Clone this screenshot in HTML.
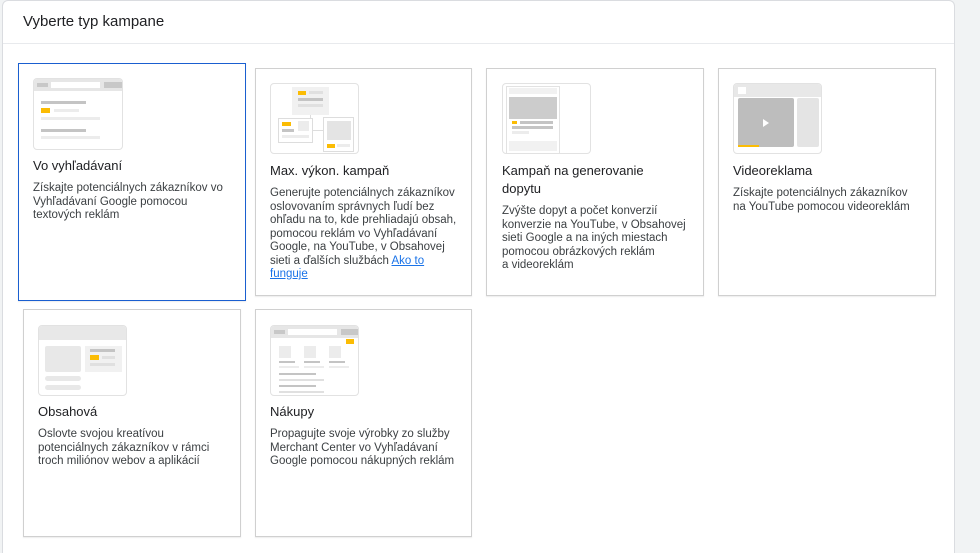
<!DOCTYPE html>
<html style="width:980px;height:553px;overflow:hidden"><head><meta charset="utf-8"><style>
*{margin:0;padding:0;box-sizing:border-box}
body{width:980px;height:553px;background:#f1f3f4;font-family:"Liberation Sans",Arial,sans-serif;position:relative;overflow:hidden;color:#202124}
.panel{position:absolute;left:2px;top:0;width:953px;height:553px;background:#fff;border:1px solid #dadce0;border-bottom:none;border-radius:6px 6px 0 0}
.hdr{position:absolute;left:23px;top:13px;font-size:15px;color:#202124}
.div{position:absolute;left:3px;top:43px;width:951px;height:1px;background:#e8eaed}
.card{position:absolute;background:#fff;border:1px solid #d0d0d0;box-shadow:0 1px 1px rgba(0,0,0,.08)}
.sel{border:1.5px solid #1a5fd0}
.ill{position:absolute;width:89px;height:71px;border:1px solid #e2e2e2;border-radius:4px;overflow:hidden;background:#fff}
.ill div{position:absolute}
.t{position:absolute;font-size:13px;line-height:18px;color:#202124;font-weight:500}
.d{position:absolute;font-size:11.5px;line-height:13.5px;color:#3c4043}
a{color:#1a73e8}
.y{background:#fbbc04}.g{background:#c4c4c4}.l{background:#ececec}
</style></head><body>
<div class="panel"></div>
<div class="hdr">Vyberte typ kampane</div>
<div class="div"></div>

<div class="card sel" style="left:18px;top:63px;width:228px;height:238px"></div>
<div class="ill" style="left:33px;top:78px;width:90px;height:72px">
 <div class="l" style="left:0;top:0;width:90px;height:12px;background:#e6e6e6"></div>
 <div style="left:3px;top:4px;width:11px;height:4px;background:#c8c8c8"></div>
 <div style="left:17px;top:3px;width:49px;height:6px;background:#fff"></div>
 <div style="left:70px;top:3px;width:18px;height:6px;background:#c8c8c8"></div>
 <div class="g" style="left:7px;top:22px;width:45px;height:3px"></div>
 <div class="y" style="left:7px;top:29px;width:9px;height:5px"></div>
 <div class="l" style="left:20px;top:30px;width:25px;height:3px"></div>
 <div class="l" style="left:7px;top:38px;width:59px;height:3px"></div>
 <div class="g" style="left:7px;top:50px;width:45px;height:3px"></div>
 <div class="l" style="left:7px;top:57px;width:59px;height:3px"></div>
</div>
<div class="t" style="left:33px;top:157px">Vo vyhľadávaní</div>
<div class="d" style="left:33px;top:182px">Získajte potenciálnych zákazníkov vo<br>Vyhľadávaní Google pomocou<br>textových reklám</div>

<div class="card" style="left:255px;top:68px;width:217px;height:228px"></div>
<div class="ill" style="left:270px;top:83px">
 <div style="left:21px;top:3px;width:37px;height:28px;background:#f1f1f1"></div>
 <div class="y" style="left:27px;top:7px;width:8px;height:4px"></div>
 <div class="l" style="left:38px;top:7px;width:14px;height:3px;background:#e0e0e0"></div>
 <div class="g" style="left:27px;top:14px;width:25px;height:3px"></div>
 <div class="l" style="left:27px;top:20px;width:25px;height:3px;background:#e0e0e0"></div>
 <div style="left:39px;top:31px;width:1px;height:4px;background:#ddd"></div>
 <div style="left:7px;top:34px;width:35px;height:25px;border:1px solid #ddd"></div>
 <div class="y" style="left:11px;top:38px;width:9px;height:4px"></div>
 <div class="l" style="left:27px;top:37px;width:11px;height:10px"></div>
 <div class="g" style="left:11px;top:45px;width:12px;height:3px"></div>
 <div class="l" style="left:11px;top:51px;width:27px;height:3px"></div>
 <div style="left:42px;top:46px;width:10px;height:1px;background:#ddd"></div>
 <div style="left:52px;top:33px;width:31px;height:35px;border:1px solid #ddd"></div>
 <div class="l" style="left:56px;top:37px;width:24px;height:19px;background:#e4e4e4"></div>
 <div class="y" style="left:56px;top:60px;width:8px;height:4px"></div>
 <div class="l" style="left:66px;top:60px;width:13px;height:3px"></div>
</div>
<div class="t" style="left:270px;top:162px">Max. výkon. kampaň</div>
<div class="d" style="left:270px;top:187px">Generujte potenciálnych zákazníkov<br>oslovovaním správnych ľudí bez<br>ohľadu na to, kde prehliadajú obsah,<br>pomocou reklám vo Vyhľadávaní<br>Google, na YouTube, v Obsahovej<br>sieti a ďalších službách <a href="#">Ako to<br>funguje</a></div>

<div class="card" style="left:486px;top:68px;width:218px;height:228px"></div>
<div class="ill" style="left:502px;top:83px">
 <div style="left:3px;top:2px;width:54px;height:70px;border:1px solid #e2e2e2"></div>
 <div class="l" style="left:6px;top:4px;width:48px;height:6px;background:#f1f1f1"></div>
 <div style="left:6px;top:13px;width:48px;height:22px;background:#ccc"></div>
 <div class="y" style="left:9px;top:37px;width:5px;height:3px"></div>
 <div class="g" style="left:17px;top:37px;width:33px;height:3px"></div>
 <div class="g" style="left:9px;top:42px;width:41px;height:3px"></div>
 <div class="l" style="left:9px;top:47px;width:17px;height:3px"></div>
 <div class="l" style="left:6px;top:57px;width:48px;height:10px;background:#f1f1f1"></div>
</div>
<div class="t" style="left:502px;top:162px">Kampaň na generovanie<br>dopytu</div>
<div class="d" style="left:502px;top:205px">Zvýšte dopyt a počet konverzií<br>konverzie na YouTube, v Obsahovej<br>sieti Google a na iných miestach<br>pomocou obrázkových reklám<br>a videoreklám</div>

<div class="card" style="left:718px;top:68px;width:218px;height:228px"></div>
<div class="ill" style="left:733px;top:83px">
 <div style="left:0;top:0;width:89px;height:13px;background:#e8e8e8"></div>
 <div style="left:4px;top:3px;width:8px;height:7px;background:#fff"></div>
 <div style="left:4px;top:14px;width:56px;height:49px;background:#bdbdbd;border-radius:2px"></div>
 <div style="left:29px;top:35px;width:0;height:0;border-left:6px solid #fff;border-top:4px solid transparent;border-bottom:4px solid transparent"></div>
 <div class="y" style="left:4px;top:61px;width:21px;height:2px"></div>
 <div style="left:63px;top:14px;width:22px;height:49px;background:#e4e4e4;border-radius:2px"></div>
</div>
<div class="t" style="left:733px;top:162px">Videoreklama</div>
<div class="d" style="left:733px;top:187px">Získajte potenciálnych zákazníkov<br>na YouTube pomocou videoreklám</div>

<div class="card" style="left:23px;top:309px;width:218px;height:228px"></div>
<div class="ill" style="left:38px;top:325px">
 <div style="left:0;top:0;width:89px;height:14px;background:#e8e8e8"></div>
 <div style="left:6px;top:20px;width:36px;height:26px;background:#e8e8e8;border-radius:2px"></div>
 <div style="left:46px;top:20px;width:37px;height:26px;background:#f1f1f1"></div>
 <div class="g" style="left:51px;top:23px;width:25px;height:3px"></div>
 <div class="y" style="left:51px;top:29px;width:9px;height:5px"></div>
 <div class="l" style="left:63px;top:30px;width:13px;height:3px;background:#e0e0e0"></div>
 <div class="l" style="left:51px;top:37px;width:25px;height:3px;background:#e0e0e0"></div>
 <div style="left:6px;top:50px;width:36px;height:5px;background:#e8e8e8;border-radius:3px"></div>
 <div style="left:6px;top:59px;width:36px;height:5px;background:#e8e8e8;border-radius:3px"></div>
</div>
<div class="t" style="left:38px;top:403px">Obsahová</div>
<div class="d" style="left:38px;top:428px">Oslovte svojou kreatívou<br>potenciálnych zákazníkov v rámci<br>troch miliónov webov a aplikácií</div>

<div class="card" style="left:255px;top:309px;width:217px;height:228px"></div>
<div class="ill" style="left:270px;top:325px">
 <div style="left:0;top:0;width:89px;height:12px;background:#e6e6e6"></div>
 <div style="left:3px;top:4px;width:11px;height:4px;background:#c8c8c8"></div>
 <div style="left:17px;top:3px;width:49px;height:6px;background:#fff"></div>
 <div style="left:70px;top:3px;width:18px;height:6px;background:#c8c8c8"></div>
 <div class="l" style="left:8px;top:20px;width:12px;height:12px"></div>
 <div class="l" style="left:33px;top:20px;width:12px;height:12px"></div>
 <div class="l" style="left:58px;top:20px;width:12px;height:12px"></div>
 <div class="y" style="left:75px;top:13px;width:8px;height:5px"></div>
 <div class="g" style="left:8px;top:35px;width:16px;height:2px"></div>
 <div class="g" style="left:33px;top:35px;width:16px;height:2px"></div>
 <div class="g" style="left:58px;top:35px;width:16px;height:2px"></div>
 <div class="l" style="left:8px;top:40px;width:20px;height:2px"></div>
 <div class="l" style="left:33px;top:40px;width:20px;height:2px"></div>
 <div class="l" style="left:58px;top:40px;width:20px;height:2px"></div>
 <div class="g" style="left:8px;top:47px;width:37px;height:2px"></div>
 <div class="l" style="left:8px;top:53px;width:45px;height:2px;background:#e0e0e0"></div>
 <div class="g" style="left:8px;top:59px;width:37px;height:2px"></div>
 <div class="l" style="left:8px;top:65px;width:45px;height:2px;background:#e0e0e0"></div>
</div>
<div class="t" style="left:270px;top:403px">Nákupy</div>
<div class="d" style="left:270px;top:428px">Propagujte svoje výrobky zo služby<br>Merchant Center vo Vyhľadávaní<br>Google pomocou nákupných reklám</div>
</body></html>
